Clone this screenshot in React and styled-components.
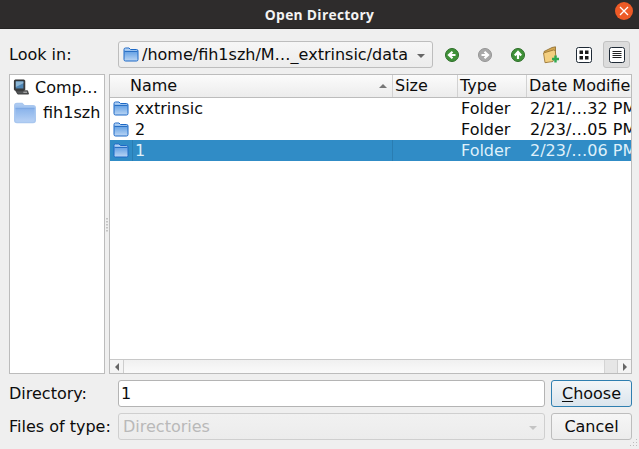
import React from 'react'
import styled, { createGlobalStyle } from 'styled-components'

const GlobalStyle = createGlobalStyle`
  html, body { margin: 0; padding: 0; background: #efefef; }
  * { box-sizing: border-box; }
`

const Dialog = styled.div`
  width: 639px;
  height: 449px;
  position: relative;
  overflow: hidden;
  background: #efefef;
  color: #0c0c0c;
  font-family: "DejaVu Sans", sans-serif;
  font-size: 16px;
  display: flex;
  flex-direction: column;
`
const TitleBar = styled.div`
  height: 29px;
  flex: none;
  background: #2e2c2c;
  color: #f3f3f3;
  display: flex;
  align-items: center;
  justify-content: center;
  position: relative;
  font-family: "Open Sans", sans-serif;
  font-weight: 700;
  font-size: 13.8px;
  letter-spacing: 0.3px;
  border-bottom: 1px solid #242323;
`
const CloseButton = styled.div`
  position: absolute;
  right: 6px;
  top: 2px;
  width: 18px;
  height: 18px;
  border-radius: 50%;
  background: #ee5a26;
  display: flex;
  align-items: center;
  justify-content: center;
`
const Content = styled.div`
  flex: 1;
  padding: 12px 7px 9px 9px;
  display: flex;
  flex-direction: column;
`
const TopRow = styled.div`
  height: 27px;
  display: flex;
  align-items: center;
`
const RowLabel = styled.div`
  width: 109px;
  flex: none;
  white-space: nowrap;
`
const Combo = styled.div`
  width: ${p => p.$width}px;
  height: 27px;
  flex: none;
  border: 1px solid ${p => (p.$disabled ? '#cfcfcf' : '#bdbdbd')};
  border-radius: 3px;
  background: ${p => (p.$disabled ? 'linear-gradient(#f1f1f1, #ececec)' : 'linear-gradient(#f6f6f6, #ececec)')};
  color: ${p => (p.$disabled ? '#b9b9b9' : 'inherit')};
  display: flex;
  align-items: center;
  padding-left: 4px;
  gap: 3px;
  white-space: nowrap;
  overflow: hidden;
`
const ComboText = styled.span`
  flex: 1;
  overflow: hidden;
`
const Arrow = styled.span`
  width: 0;
  height: 0;
  flex: none;
  margin: 2px 7px 0 0;
  border-left: 4px solid transparent;
  border-right: 4px solid transparent;
  border-top: 4px solid ${p => (p.$disabled ? '#c4c4c4' : '#666')};
`
const Tools = styled.div`
  display: flex;
  align-items: center;
  margin-left: 2px;
`
const ToolButton = styled.div`
  width: ${p => (p.$active ? 27 : 33)}px;
  height: 27px;
  flex: none;
  margin-left: ${p => (p.$active ? 3 : 0)}px;
  display: flex;
  align-items: center;
  justify-content: center;
  border-radius: 3px;
  ${p => p.$active && 'background: #dcdcdc; border: 1px solid #c2c2c2;'}
`
const Panes = styled.div`
  height: 300px;
  margin-top: 6px;
  display: flex;
  gap: 4px;
`
const Sidebar = styled.div`
  width: 96px;
  flex: none;
  background: #fff;
  border: 1px solid #bcbcbc;
  padding: 2px 0 0 3px;
`
const SideItem = styled.div`
  height: ${p => p.$height}px;
  display: flex;
  align-items: center;
  gap: ${p => p.$gap}px;
  white-space: nowrap;
`
const FilePane = styled.div`
  width: 523px;
  flex: none;
  background: #fff;
  border: 1px solid #bcbcbc;
  display: flex;
  flex-direction: column;
  position: relative;
`
const HeaderRow = styled.div`
  height: 23px;
  flex: none;
  display: flex;
  background: linear-gradient(#fbfbfb, #ececec);
  border-bottom: 1px solid #bcbcbc;
`
const HeaderCell = styled.div`
  width: ${p => p.$width}px;
  flex: none;
  position: relative;
  padding-left: ${p => p.$pad}px;
  border-right: ${p => (p.$last ? 'none' : '1px solid #d2d2d2')};
  line-height: 22px;
  white-space: nowrap;
  overflow: hidden;
`
const SortArrow = styled.span`
  position: absolute;
  right: 5px;
  top: 9px;
  width: 0;
  height: 0;
  border-left: 4px solid transparent;
  border-right: 4px solid transparent;
  border-bottom: 4px solid #777;
`
const Rows = styled.div`
  flex: 1;
`
const Row = styled.div`
  height: 21px;
  display: flex;
  align-items: center;
  background: ${p => (p.$selected ? '#308cc6' : 'transparent')};
  color: ${p => (p.$selected ? '#dff0fa' : 'inherit')};
`
const Cell = styled.div`
  width: ${p => p.$width}px;
  height: 21px;
  line-height: 21px;
  flex: none;
  padding-left: ${p => p.$pad}px;
  white-space: nowrap;
  overflow: hidden;
`
const NameCell = styled(Cell)`
  display: flex;
  align-items: center;
  gap: 3px;
  padding-left: 3px;
`
const NameText = styled.span`
  height: 21px;
  padding-left: 3px;
  flex: 1;
  ${p => p.$selected && 'border-left: 1px solid #2a7db2; padding-left: 2px; border-right: 1px solid #2a7db2;'}
`
const ScrollBar = styled.div`
  height: 14px;
  flex: none;
  display: flex;
  border-top: 1px solid #c8c8c8;
  background: linear-gradient(#f0f0f0, #fafafa);
`
const ScrollEnd = styled.div`
  width: 14px;
  flex: none;
  display: flex;
  align-items: center;
  justify-content: center;
  background: #f4f4f4;
  border-${p => (p.$right ? 'left' : 'right')}: 1px solid #cdcdcd;
`
const ScrollTrack = styled.div`
  flex: 1;
  display: flex;
  justify-content: flex-end;
`
const ScrollGap = styled.div`
  width: 13px;
  background: #e6e6e6;
  border-left: 1px solid #d4d4d4;
`
const Tri = styled.span`
  width: 0;
  height: 0;
  border-top: 4px solid transparent;
  border-bottom: 4px solid transparent;
  ${p => (p.$right ? 'border-left: 4px solid #666;' : 'border-right: 4px solid #666;')}
`
const FormRow = styled.div`
  height: 27px;
  margin-top: 6px;
  display: flex;
  align-items: center;
`
const Input = styled.div`
  width: 427px;
  height: 27px;
  flex: none;
  background: #fff;
  border: 1px solid #b4b4b4;
  border-radius: 3px;
  padding-left: 2px;
  line-height: 25px;
`
const Button = styled.div`
  width: 81px;
  height: 27px;
  flex: none;
  margin-left: 6px;
  border: 1px solid ${p => (p.$primary ? '#2f7fb0' : '#bdbdbd')};
  border-radius: 3px;
  background: ${p => (p.$primary ? 'linear-gradient(#f3f6f8, #dbe5ed)' : 'linear-gradient(#f6f6f6, #ececec)')};
  text-align: center;
  line-height: 25px;
`
const Mnemonic = styled.span`
  text-decoration: underline;
  text-underline-offset: 2px;
`
const Grip = styled.svg`
  position: absolute;
  right: 1px;
  bottom: 1px;
`
const Splitter = styled.svg`
  position: absolute;
  left: 106px;
  top: 218px;
`

const FolderIcon = ({ w = 16, h = 15, light, idSuffix }) => (
  <svg width={w} height={h} viewBox="0 0 16 15" style={{ flex: 'none' }}>
    <defs>
      <linearGradient id={`f${idSuffix}`} x1="0" y1="0" x2="0" y2="1">
        <stop offset="0" stopColor={light ? '#b5cff2' : '#cfe2f8'} />
        <stop offset="0.35" stopColor={light ? '#8fb7ec' : '#6ea7e6'} />
        <stop offset="1" stopColor={light ? '#b9d2f5' : '#bcd6f4'} />
      </linearGradient>
    </defs>
    <path
      d="M1 2.5 Q1 1 2.5 1 H6 L7.5 2.5 H13.5 Q15 2.5 15 4 V12.5 Q15 14 13.5 14 H2.5 Q1 14 1 12.5 Z"
      fill={`url(#f${idSuffix})`}
      stroke={light ? '#a9c7ef' : '#1c68c6'}
      strokeWidth="1"
    />
    <path d="M1.5 4.5 H14.5" stroke={light ? '#7ea9e4' : '#2a70c4'} strokeWidth="1" />
  </svg>
)

const ComputerIcon = () => (
  <svg width="16" height="17" viewBox="0 0 17 17" style={{ flex: 'none' }}>
    <rect x="1.5" y="0.5" width="11" height="11" rx="1" fill="#3a3f44" stroke="#2a2a2a" />
    <rect x="3" y="2" width="8" height="7.5" fill="#4f86b5" />
    <path d="M3 2 H11 V4 L3 8 Z" fill="#8db7d6" />
    <path d="M3 12 H15.5 L16.5 15.5 H5 Z" fill="#55585a" stroke="#2b2b2b" strokeWidth="0.8" />
    <path d="M11 13.5 H15" stroke="#c6c6c6" />
  </svg>
)

const NavIcon = ({ color, edge, dir }) => {
  const paths = {
    left: 'M11.5 8 H6 M8.5 4.8 L5 8 L8.5 11.2',
    right: 'M4.5 8 H10 M7.5 4.8 L11 8 L7.5 11.2',
    up: 'M8 12 V6 M4.8 8.5 L8 5 L11.2 8.5',
  }
  return (
    <svg width="16" height="16" viewBox="0 0 16 16">
      <circle cx="8" cy="8" r="6.5" fill={color} stroke={edge} />
      <path d={paths[dir]} fill="none" stroke="#fff" strokeWidth="2.2" />
    </svg>
  )
}

const NewFolderIcon = () => (
  <svg width="18" height="18" viewBox="0 0 18 18">
    <path d="M2 5.5 L10 1.5 L13.5 0.8 V11 L4 16.5 Z" fill="#d3a650" stroke="#8a6a2c" strokeWidth="0.8" />
    <path d="M1.5 7 L11.5 4 Q13 4 13.3 5.2 L14 11 L11 15.5 L3 16.7 Z" fill="#f3cf80" stroke="#94702e" strokeWidth="0.8" />
    <path d="M13.5 9.5 V16.5 M10 13 H17" stroke="#2fa84f" strokeWidth="2.4" />
  </svg>
)

const IconView = () => (
  <svg width="16" height="16" viewBox="0 0 16 16">
    <rect x="0.5" y="0.5" width="15" height="15" rx="2" fill="#fff" stroke="#1f2a36" />
    <rect x="3.5" y="3.5" width="3.5" height="3.5" fill="#1a1a1a" />
    <rect x="9" y="3.5" width="3.5" height="3.5" fill="#1a1a1a" />
    <rect x="3.5" y="9" width="3.5" height="3.5" fill="#1a1a1a" />
    <rect x="9" y="9" width="3.5" height="3.5" fill="#1a1a1a" />
  </svg>
)

const ListView = () => (
  <svg width="16" height="16" viewBox="0 0 16 16">
    <rect x="0.5" y="0.5" width="15" height="15" rx="2" fill="#fff" stroke="#1f2a36" />
    <path d="M3.5 4.5 H12.5 M3.5 6.5 H12.5 M3.5 8.5 H12.5 M3.5 10.5 H12.5" stroke="#222" />
  </svg>
)

const columns = { name: 283, size: 65, type: 69, date: 104 }

const files = [
  { name: 'xxtrinsic', date: '2/21/…32 PM' },
  { name: '2', date: '2/23/…05 PM' },
  { name: '1', date: '2/23/…06 PM', selected: true },
]

export default function App() {
  return (
    <Dialog>
      <GlobalStyle />
      <TitleBar>
        Open Directory
        <CloseButton>
          <svg width="10" height="10" viewBox="0 0 10 10">
            <path d="M1 1 L9 9 M9 1 L1 9" stroke="#fff" strokeWidth="1.3" />
          </svg>
        </CloseButton>
      </TitleBar>
      <Content>
        <TopRow>
          <RowLabel>Look in:</RowLabel>
          <Combo $width={315}>
            <FolderIcon idSuffix="combo" />
            <ComboText>/home/fih1szh/M…_extrinsic/data</ComboText>
            <Arrow />
          </Combo>
          <Tools>
            <ToolButton><NavIcon color="#3f9138" edge="#2d6e28" dir="left" /></ToolButton>
            <ToolButton><NavIcon color="#a9a9a9" edge="#959595" dir="right" /></ToolButton>
            <ToolButton><NavIcon color="#3f9138" edge="#2d6e28" dir="up" /></ToolButton>
            <ToolButton><NewFolderIcon /></ToolButton>
            <ToolButton><IconView /></ToolButton>
            <ToolButton $active><ListView /></ToolButton>
          </Tools>
        </TopRow>
        <Panes>
          <Sidebar>
            <SideItem $height={20} $gap={6}><ComputerIcon />Comp…</SideItem>
            <SideItem $height={31} $gap={6}><FolderIcon w={24} h={22} light idSuffix="side" />fih1szh</SideItem>
          </Sidebar>
          <FilePane>
            <HeaderRow>
              <HeaderCell $width={columns.name} $pad={20}>Name<SortArrow /></HeaderCell>
              <HeaderCell $width={columns.size} $pad={2}>Size</HeaderCell>
              <HeaderCell $width={columns.type} $pad={2}>Type</HeaderCell>
              <HeaderCell $width={columns.date} $pad={2} $last>Date Modified</HeaderCell>
            </HeaderRow>
            <Rows>
              {files.map((f, i) => (
                <Row key={i} $selected={f.selected}>
                  <NameCell $width={columns.name}>
                    <FolderIcon idSuffix={`row${i}`} />
                    <NameText $selected={f.selected}>{f.name}</NameText>
                  </NameCell>
                  <Cell $width={columns.size} />
                  <Cell $width={columns.type} $pad={3}>Folder</Cell>
                  <Cell $width={columns.date} $pad={3}>{f.date}</Cell>
                </Row>
              ))}
            </Rows>
            <ScrollBar>
              <ScrollEnd><Tri /></ScrollEnd>
              <ScrollTrack><ScrollGap /></ScrollTrack>
              <ScrollEnd $right><Tri $right /></ScrollEnd>
            </ScrollBar>
          </FilePane>
        </Panes>
        <FormRow>
          <RowLabel>Directory:</RowLabel>
          <Input>1</Input>
          <Button $primary><Mnemonic>C</Mnemonic>hoose</Button>
        </FormRow>
        <FormRow>
          <RowLabel>Files of type:</RowLabel>
          <Combo $width={427} $disabled>
            <ComboText>Directories</ComboText>
            <Arrow $disabled />
          </Combo>
          <Button>Cancel</Button>
        </FormRow>
      </Content>
      <Splitter width="2" height="15" viewBox="0 0 2 15">
        <path d="M0 0h2v1.5H0z M0 3h2v1.5H0z M0 6h2v1.5H0z M0 9h2v1.5H0z M0 12h2v1.5H0z" fill="#c4c4c4" />
      </Splitter>
      <Grip width="10" height="10" viewBox="0 0 10 10">
        <path d="M8 1h1v1H8z M8 4h1v1H8z M8 7h1v1H8z M5 4h1v1H5z M5 7h1v1H5z M2 7h1v1H2z" fill="#bdbdbd" />
      </Grip>
    </Dialog>
  )
}
